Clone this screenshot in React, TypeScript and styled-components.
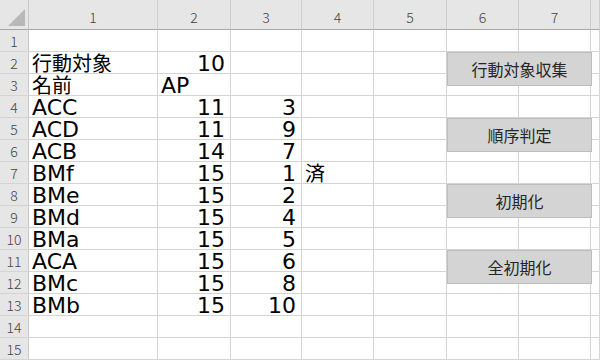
import { Fragment } from "react";
import { createGlobalStyle, styled } from "styled-components";

const GlobalStyle = createGlobalStyle`
  html, body {
    margin: 0;
    padding: 0;
    background: #ffffff;
    overflow: hidden;
  }
`;

const COLS = ["29px", "129px", "73px", "71px", "72px", "73px", "72px", "72px", "1fr"];

const Sheet = styled.div`
  position: relative;
  width: 600px;
  height: 360px;
  overflow: hidden;
  display: grid;
  grid-template-columns: ${COLS.join(" ")};
  grid-template-rows: 30px repeat(15, 22px);
  font-family: "Noto Sans CJK JP", "Noto Sans", sans-serif;
`;

const Corner = styled.div`
  background: #e6e6e6;
  border-right: 1px solid #c8c8c8;
  border-bottom: 1px solid #a6a6a6;
  display: flex;
  align-items: flex-end;
  justify-content: flex-end;
  padding: 0 3px 3px 0;
`;

const ColHead = styled.div`
  background: #e6e6e6;
  border-right: 1px solid #cfcfcf;
  border-bottom: 1px solid #a6a6a6;
  color: #444444;
  font-weight: 300;
  font-size: 14px;
  display: flex;
  align-items: center;
  justify-content: center;
  padding-top: 4px;
`;

const RowHead = styled.div`
  background: #e6e6e6;
  border-right: 1px solid #c8c8c8;
  border-bottom: 1px solid #d4d4d4;
  color: #444444;
  font-weight: 300;
  font-size: 14px;
  display: flex;
  align-items: center;
  justify-content: center;
  line-height: 1;
`;

const Cell = styled.div<{ $align?: "left" | "right"; $cjk?: boolean }>`
  border-right: 1px solid #d4d4d4;
  border-bottom: 1px solid #d4d4d4;
  color: #000000;
  font-family: ${(p) =>
    p.$cjk ? `"Noto Sans CJK JP", sans-serif` : `"DejaVu Sans", "Noto Sans CJK JP", sans-serif`};
  font-size: ${(p) => (p.$cjk ? "20px" : "22px")};
  line-height: 22px;
  height: 22px;
  white-space: nowrap;
  text-align: ${(p) => p.$align ?? "left"};
  padding-top: ${(p) => (p.$cjk ? "0" : "1px")};
  padding-left: ${(p) => (p.$align === "right" ? "0" : "3px")};
  padding-right: ${(p) => (p.$align === "right" ? "5px" : "0")};
  box-sizing: border-box;
`;

const SheetButton = styled.div<{ $top: number }>`
  position: absolute;
  left: 447px;
  top: ${(p) => p.$top}px;
  width: 145px;
  height: 34px;
  box-sizing: border-box;
  background: #d4d4d4;
  border: 1px solid #bdbdbd;
  color: #262626;
  font-size: 16px;
  display: flex;
  align-items: center;
  justify-content: center;
  z-index: 2;
`;

type Row = [string, string, string, string];

const rows: Row[] = [
  ["", "", "", ""],
  ["行動対象", "10", "", ""],
  ["名前", "AP", "", ""],
  ["ACC", "11", "3", ""],
  ["ACD", "11", "9", ""],
  ["ACB", "14", "7", ""],
  ["BMf", "15", "1", "済"],
  ["BMe", "15", "2", ""],
  ["BMd", "15", "4", ""],
  ["BMa", "15", "5", ""],
  ["ACA", "15", "6", ""],
  ["BMc", "15", "8", ""],
  ["BMb", "15", "10", ""],
  ["", "", "", ""],
  ["", "", "", ""],
];

const buttons = [
  { label: "行動対象収集", top: 52 },
  { label: "順序判定", top: 118 },
  { label: "初期化", top: 184 },
  { label: "全初期化", top: 250 },
];

const isNumber = (v: string) => /^\d+$/.test(v);
const isCjk = (v: string) => /[\u3000-\u9fff]/.test(v);

export default function App() {
  return (
    <>
      <GlobalStyle />
      <Sheet>
        <Corner>
          <svg width="17" height="17" viewBox="0 0 17 17">
            <polygon points="17,0 17,17 0,17" fill="#b8b8b8" />
          </svg>
        </Corner>
        {["1", "2", "3", "4", "5", "6", "7", ""].map((h, i) => (
          <ColHead key={`h${i}`}>{h}</ColHead>
        ))}
        {rows.map((r, ri) => (
          <Fragment key={`r${ri}`}>
            <RowHead>{ri + 1}</RowHead>
            {r.map((v, ci) => (
              <Cell key={ci} $align={isNumber(v) ? "right" : "left"} $cjk={isCjk(v)}>
                {v}
              </Cell>
            ))}
            <Cell />
            <Cell />
            <Cell />
            <Cell />
          </Fragment>
        ))}
        {buttons.map((b) => (
          <SheetButton key={b.label} $top={b.top}>
            {b.label}
          </SheetButton>
        ))}
      </Sheet>
    </>
  );
}
